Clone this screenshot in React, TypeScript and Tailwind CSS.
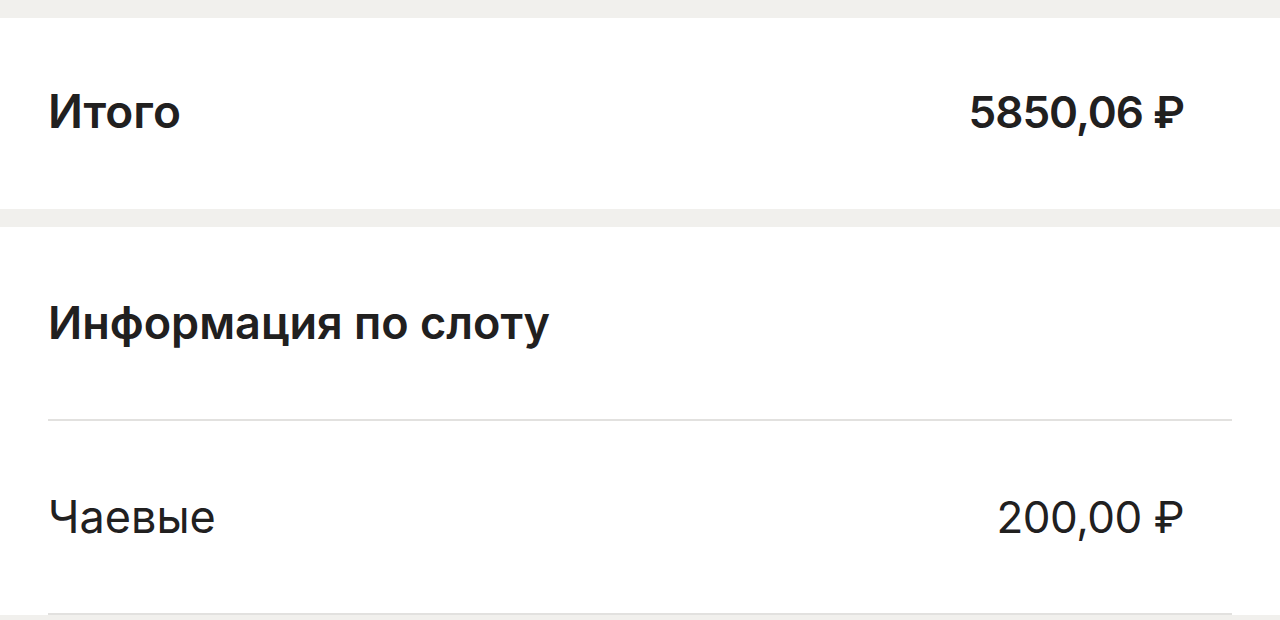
import React from "react";

const font = { fontFamily: "Inter, 'Noto Sans', sans-serif" };

export default function App() {
  return (
    <div className="min-h-[620px] bg-[#f1f0ed] pt-[18px] text-[#21201f]" style={font}>
      {/* итог */}
      <div className="flex h-[191px] items-center justify-between bg-white pb-1 pl-12 pr-24">
        <span className="text-[46px] font-semibold">Итого</span>
        <span className="text-[44px] font-semibold tracking-[-1px]">5850,06 ₽</span>
      </div>

      <div className="mt-[18px] bg-white px-12">
        <div className="flex h-[194px] items-center border-b-2 border-[#e2e1df]">
          <h2 className="text-[45px] font-semibold">Информация по слоту</h2>
        </div>
        <div className="flex h-[194px] items-center justify-between border-b-2 border-[#e2e1df] pr-12">
          <span className="text-[45px] font-normal">Чаевые</span>
          <span className="text-[44px] font-normal tracking-[-0.5px]">200,00 ₽</span>
        </div>
      </div>
    </div>
  );
}
